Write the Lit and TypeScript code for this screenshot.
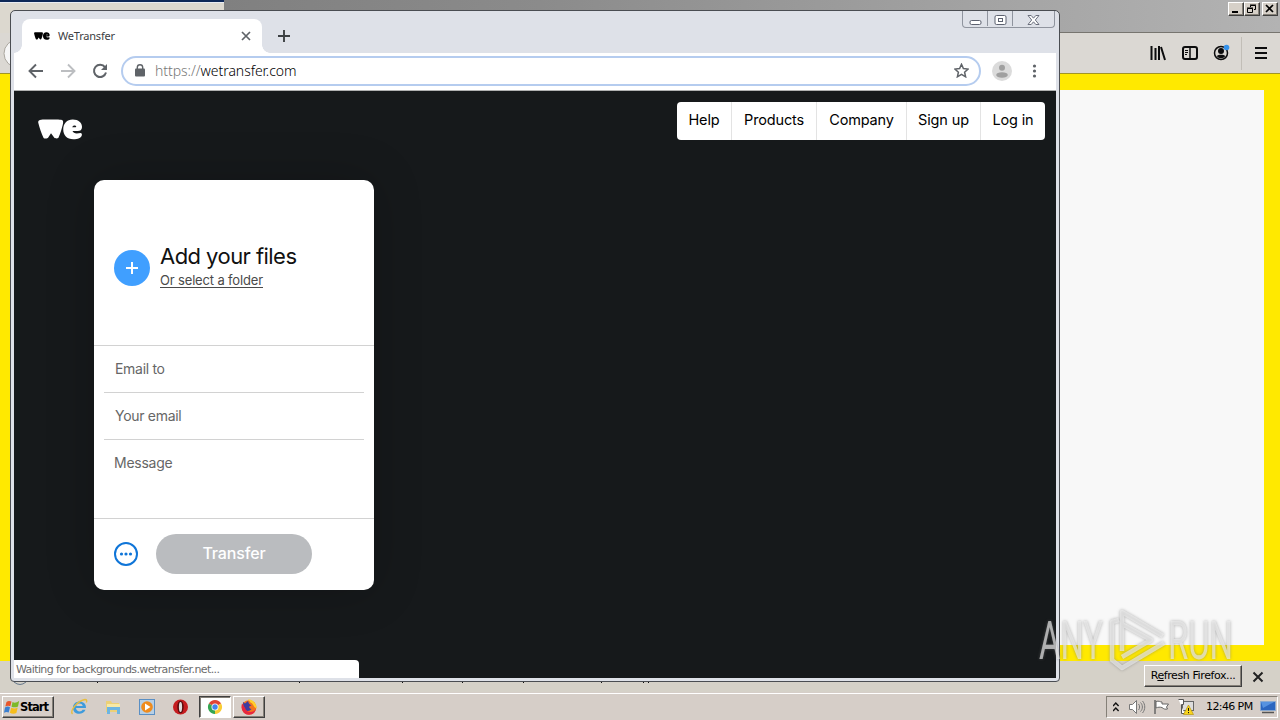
import { LitElement, html, css, svg } from "lit";
import { customElement } from "lit/decorators.js";

const wePath = svg`
  <path d="M1 1.500C3 0 8 .6 12 .6S22 0 25 1.200c1 .6.8 2.800.3 4.800C24.300 10 23 15 21 19.500c-.6 1.300-3.600 1.300-4.500 0L13.300 15l-3 4.700c-.8 1.200-4 1.100-4.700-.1C3.500 15 1.500 9 .4 4.500.1 3.200.1 2.200 1 1.500z"/>
  <path fill-rule="evenodd" d="M35.500.4c6 0 9.500 3.400 9.500 8 0 3-1.800 4.300-4.500 4.300h-5.200c.5 1.700 2.200 2.400 4.300 2.400 1.500 0 2.600-.5 4-.5 1 0 1.500 1 1.200 2.300-.6 2.800-4 4.300-8.600 4.300-6.700 0-10.400-4.300-10.400-10.500C25.800 4.600 29.600.4 35.500.4zM35 8.700h3c.8 0 1.200-.4 1-1-.5-1.500-3.500-1.400-4 1z"/>`;

@customElement("app-root")
export class AppRoot extends LitElement {
  static styles = css`
    :host { display: block; width: 1280px; height: 720px; overflow: hidden; position: relative; background: #d6cec8; font-family: "DejaVu Sans", sans-serif; }
    * { box-sizing: border-box; }
    svg { display: block; flex: none; }
    .desktop { display: flex; flex-direction: column; height: 720px; }

    .ff-title { height: 33px; display: flex; background: #dcd8cf; }
    .ff-tab { width: 224px; height: 33px; border-top: 2px solid #0e2858; box-shadow: inset 0 1px #e9ecf2; }
    .ff-strip { flex: 1; background: linear-gradient(90deg, #808080, #8b8b8b 30%, #b3b3b3); border-bottom: 1px solid #77756f; display: flex; justify-content: flex-end; align-items: flex-start; padding: 2px 2px 0 0; }
    .wb { width: 16px; height: 14px; background: #d6d0c8; border: 1px solid; border-color: #fff #404040 #404040 #fff; box-shadow: inset -1px -1px #858078; }
    .wb.last { margin-left: 2px; }
    .ff-bar { height: 40px; background: #dbd8d3; display: flex; align-items: center; justify-content: flex-end; padding-right: 13px; }
    .ff-bar .i1 { margin-right: 16px; }
    .ff-bar .i2 { margin-right: 15px; }
    .ff-bar .i3 { margin-right: 10px; }
    .ff-sep { width: 1px; height: 33px; background: #c2beb7; margin-right: 13px; }
    .ff-body { height: 588px; background: #ffe900; border-top: 1px solid #a19527; padding: 16px 16px 16px 30px; }
    .ff-page { height: 555px; background: #f8f8f8; }
    .ff-note { height: 31px; background: #d5d1c8; display: flex; justify-content: flex-end; align-items: center; padding-right: 16px; }
    .refresh { width: 98px; height: 22px; margin: -2px 10px 0 0; border: 1px solid; border-color: #fff #404040 #404040 #fff; box-shadow: inset -1px -1px #858078; background: #d6d1c9; font-size: 11px; letter-spacing: -0.4px; line-height: 20px; text-align: center; color: #000; white-space: nowrap; }

    .taskbar { height: 28px; border-top: 1px solid #d6cec8; background: #d6cec8; box-shadow: inset 0 1px #fff; display: flex; align-items: center; padding: 2px 2px 2px; }
    .start { width: 52px; height: 22px; display: flex; align-items: center; border: 1px solid; border-color: #fff #404040 #404040 #fff; box-shadow: inset -1px -1px #858078; padding-left: 1px; font: bold 11.500px "DejaVu Sans", sans-serif; letter-spacing: -0.9px; color: #000; white-space: nowrap; }
    .ql { display: flex; align-items: center; margin-left: 16px; gap: 16px; }
    .q-on { width: 32px; height: 22px; margin-left: 9px; background: #fff; border: 1px solid; border-color: #404040 #fff #fff #404040; box-shadow: inset 1px 1px #858078; display: grid; place-items: center; }
    .q-off { width: 32px; height: 22px; margin-left: 2px; border: 1px solid; border-color: #fff #404040 #404040 #fff; box-shadow: inset -1px -1px #858078; display: grid; place-items: center; }
    .tray { margin-left: auto; width: 172px; height: 22px; border: 1px solid; border-color: #858078 #fff #fff #858078; display: flex; align-items: center; padding-left: 6px; }
    .speaker { margin-left: 6px; }
    .trayicon { margin-left: 8px; }
    .clock { margin-left: 12px; width: 46px; font-size: 11px; letter-spacing: -0.6px; white-space: nowrap; color: #000; }
    .peek { margin-left: 8px; }

    .win { position: absolute; left: 10px; top: 10px; width: 1050px; height: 672px; border: 1px solid #4a4d52; border-radius: 5px 5px 4px 4px; background: #dee1e8; padding: 0 3px 3px; display: flex; flex-direction: column; }
    .tabs { height: 42px; display: flex; align-items: flex-end; flex: none; }
    .tab { position: relative; width: 240px; height: 34px; margin-left: 8px; background: #fff; border-radius: 8px 8px 0 0; display: flex; align-items: center; padding: 0 11px 0 12px; }
    .tab::before, .tab::after { content: ""; position: absolute; bottom: 0; width: 8px; height: 8px; }
    .tab::before { left: -8px; background: radial-gradient(circle at 0 0, transparent 7.5px, #fff 8px); }
    .tab::after { right: -8px; background: radial-gradient(circle at 100% 0, transparent 7.5px, #fff 8px); }
    .tt { font: 11px "Noto Sans", sans-serif; color: #3c4043; margin: -2px 0 0 8px; flex: 1; letter-spacing: -0.2px; white-space: nowrap; }
    .plus { margin: 0 0 11px 16px; }
    .caps { margin-left: auto; margin-right: 1px; align-self: flex-start; display: flex; width: 93px; height: 17px; border: 1px solid #8f949e; border-top: 0; border-radius: 0 0 4px 4px; }
    .cap { width: 25px; height: 15px; display: grid; place-items: center; border-right: 1px solid #8f949e; }
    .cap.x { flex: 1; border: 0; }
    .nav { height: 38px; flex: none; background: #fff; border-bottom: 1px solid #b0b1b1; display: flex; align-items: center; padding: 0 0 2px 13px; }
    .nav > svg { margin-right: 14px; }
    .nav > .reload { margin-right: 12px; }
    .omni { width: 860px; height: 30px; border: 2px solid #b5ccef; border-radius: 15px; display: flex; align-items: center; padding: 0 10px 0 12px; font: 14px "Noto Sans", sans-serif; }
    .url { margin-left: 10px; flex: 1; color: #000; font-weight: 300; letter-spacing: -0.05px; white-space: nowrap; }
    .url span { color: #777; }
    .ava { margin-left: 11px; }

    .page { flex: 1; background: #16191b; display: flex; flex-direction: column; position: relative; }
    .top { display: flex; justify-content: space-between; padding: 11px 11px 0 24px; height: 89px; flex: none; }
    .logo { margin-top: 17px; }
    .menu { display: flex; height: 38px; background: #fff; border-radius: 4px; font: 14.500px "Inter", sans-serif; letter-spacing: -0.15px; color: #000; }
    .menu div { border-right: 1px solid #e3e3e3; line-height: 36px; text-align: center; white-space: nowrap; }
    .menu div:last-child { border: 0; }
    .w1 { width: 55px; } .w2 { width: 85px; } .w3 { width: 90px; } .w4 { width: 74px; } .w5 { width: 64px; }
    .card { width: 280px; height: 410px; margin-left: 80px; background: #fff; border-radius: 10px; display: flex; flex-direction: column; font-family: "Inter", sans-serif; box-shadow: 0 0 50px rgba(0,0,0,.2); }
    .add { height: 166px; border-bottom: 1px solid #d2d2d2; display: flex; align-items: center; padding: 10px 0 0 20px; }
    .add-t { margin: -4px 0 0 10px; display: flex; flex-direction: column; align-items: flex-start; }
    .h { font-size: 22px; line-height: 26px; color: #111; letter-spacing: -0.55px; white-space: nowrap; }
    .s { font-size: 13px; line-height: 14px; margin-top: 4px; color: #4a4a4a; letter-spacing: -0.16px; border-bottom: 1px solid #4a4a4a; white-space: nowrap; }
    .f { height: 47px; margin: 0 10px; padding-left: 11px; border-bottom: 1px solid #d2d2d2; line-height: 46px; font-size: 14px; letter-spacing: -0.3px; color: #666; white-space: nowrap; }
    .m { height: 79px; padding-left: 20px; line-height: 46px; border-bottom: 1px solid #d2d2d2; font-size: 14px; letter-spacing: -0.25px; color: #666; }
    .act { flex: 1; display: flex; align-items: center; padding: 0 0 2px 20px; }
    .btn { width: 156px; height: 40px; margin-left: 18px; border-radius: 20px; background: #babcbf; color: #fff; font-size: 16px; font-weight: 500; letter-spacing: -0.15px; line-height: 38px; text-align: center; }
    .status { position: absolute; left: 0; bottom: 0; width: 345px; height: 18px; background: #fff; border-radius: 0 4px 0 0; padding-left: 2px; font-size: 11px; line-height: 19px; color: #6b6b6b; letter-spacing: -0.6px; white-space: nowrap; }
    .under { position: absolute; left: 0; top: 682px; }
    .ring { position: absolute; left: 3px; top: 39px; }
    .wm { position: absolute; left: 1030px; top: 600px; overflow: visible; filter: drop-shadow(0 0 1.500px rgba(110,110,110,.8)); }
  `;

  render() {
    return html`
      <div class="desktop">
        <div class="ff-title">
          <div class="ff-tab"></div>
          <div class="ff-strip">
            <div class="wb"><svg width="14" height="12"><path d="M3 9h6" stroke="#000" stroke-width="2"/></svg></div>
            <div class="wb"><svg width="14" height="12" fill="none" stroke="#000"><path d="M5.500 4V2.500h5v4H9M5 2h6M2.500 5.500h5v4h-5zM2 5h6"/></svg></div>
            <div class="wb last"><svg width="14" height="12"><path d="M3 2l7 7M10 2L3 9" stroke="#000" stroke-width="1.700"/></svg></div>
          </div>
        </div>
        <div class="ff-bar">
          <svg class="i1" width="16" height="16" stroke="#0c0c0d" stroke-width="2" fill="none"><path d="M1.500 1v14M5.500 3v12M9 1v14M11 2l4 13"/></svg>
          <svg class="i2" width="16" height="16" fill="none" stroke="#0c0c0d"><rect x="1" y="2" width="14" height="12" rx="2" stroke-width="2"/><path d="M8 2v12" stroke-width="1.500"/><path d="M3 5.500h3M3 7.500h3M3 9.500h2"/></svg>
          <svg class="i3" width="18" height="18"><circle cx="8" cy="9" r="6.500" fill="none" stroke="#0c0c0d" stroke-width="1.500"/><circle cx="8" cy="7" r="3" fill="#0c0c0d"/><path d="M3.800 12c1.500-1.700 7-1.700 8.500 0-1.800 3-6.700 3-8.500 0z" fill="#0c0c0d"/><circle cx="13.500" cy="3.500" r="2.800" fill="#3592ea"/></svg>
          <div class="ff-sep"></div>
          <svg width="12" height="14" stroke="#0c0c0d" stroke-width="2"><path d="M0 2h12M0 7h12M0 12h12"/></svg>
        </div>
        <div class="ff-body"><div class="ff-page"></div></div>
        <div class="ff-note">
          <div class="refresh">R<u>e</u>fresh Firefox...</div>
          <svg width="12" height="12"><path d="M1.500 1.500l9 9M10.500 1.500l-9 9" stroke="#222" stroke-width="2"/></svg>
        </div>
        <div class="taskbar">
          <div class="start">
            <svg width="16" height="16"><path d="M2.500 3C4 1.500 6 1.800 7.500 2.600L6.300 7.300C5 6.400 3 6.400 1.300 7.500z" fill="#e8562a"/><path d="M8.500 3c2 1 3.700 1 6.700-1.300L14 7.500c-2 1.200-4.700 1-6.500.2z" fill="#7db928"/><path d="M1 8.500c1.700-1.200 3.500-1.200 5-.3l-1.300 5.300c-1.500-.8-3-.8-4.700.3z" fill="#3b7fd0"/><path d="M7.200 8.700c2 1 4.700 1 6.500-.1L12.400 14c-2 1.200-4.700 1-6.500-.3z" fill="#f5bd1c"/></svg>
            Start
          </div>
          <div class="ql">
            <svg width="18" height="18"><path fill-rule="evenodd" d="M16 10H6c.3 4 5.500 4.300 6.500 1.700h3C13.500 17.500 3 17.500 3 9.700 3 1.500 16.300 1.500 16 10zM6.200 8h6.500c-.4-3.300-5.900-3.300-6.500 0z" fill="#3e9bdc"/><path d="M2.500 16C-1 13 8 2.500 15 1.500c2 0 2 1.500 1.300 3" fill="none" stroke="#e8bd3e" stroke-width="1.400"/></svg>
            <svg width="18" height="18"><path d="M2 3h5l1 2h7v9H2z" fill="#ecd077"/><path d="M3 6h13v3H3z" fill="#f7e9a6"/><path d="M3 9h13v7h-3v-4H6v4H3z" fill="#6db5e2"/></svg>
            <svg width="18" height="18"><rect x="1.500" y="1.500" width="15" height="15" fill="#b7cfe5" stroke="#5a8fc4"/><circle cx="9" cy="9" r="5.800" fill="#ef8b1d"/><path d="M7 5.500l5.500 3.500L7 12.500z" fill="#fff"/></svg>
            <svg width="18" height="18"><circle cx="8.500" cy="9" r="7.500" fill="#c51d20"/><ellipse cx="8.500" cy="9" rx="3.200" ry="6.300" fill="#5c0b0d"/><ellipse cx="8.500" cy="9" rx="1.600" ry="5" fill="#ddd"/></svg>
          </div>
          <div class="q-on"><svg width="16" height="16"><path d="M8 8L1.900 4.500A7 7 0 0 1 14.100 4.500z" fill="#e24435"/><path d="M8 8V15A7 7 0 0 1 1.900 4.500z" fill="#35a551"/><path d="M8 8L14.100 4.500A7 7 0 0 1 8 15z" fill="#f9cc34"/><circle cx="8" cy="8" r="3.500" fill="#fff"/><circle cx="8" cy="8" r="2.700" fill="#4485ee"/></svg></div>
          <div class="q-off"><svg width="18" height="18"><circle cx="9" cy="9.500" r="7.300" fill="#f4731f"/><path d="M8 1.500c5-.5 9 4.500 8.500 9-3-1-3-5-6-6z" fill="#ffd02c"/><path d="M3 4l2 1.500L8 3c.5 2 1 3 3.500 4.500-3 0-3 3 0 3.500-2 3-6.500 2.500-8-1z" fill="#3f3ca0"/><path d="M2 5.500C.5 11 3 16.500 9 16.800c4 0 6.500-3 7-6-3 5-10 4-11-1z" fill="#e8273f"/></svg></div>
          <div class="tray">
            <svg width="10" height="14" fill="none" stroke="#111" stroke-width="1.400"><path d="M0 6l2.800-3L5.600 6M0 11l2.800-3 2.800 3"/></svg>
            <svg class="speaker" width="17" height="16" fill="none" stroke="#777"><path d="M.5 5.500h3l4-4v13l-4-4h-3z" fill="#fff"/><path d="M9.500 5c1.500 1.500 1.500 4.500 0 6M11.500 3.500c2.500 2.500 2.500 6.500 0 9M13.500 2c3 3.500 3 8.500 0 12"/></svg>
            <svg class="trayicon" width="16" height="16" stroke="#666" fill="#fff"><path d="M1 1v14" stroke-width="1.500"/><path d="M2 2.500c3-1 4 .5 6 .5v2h6.500l-2 3 1 2c-2 .5-4 0-5.500-1.500-2-.5-4-.5-6 .5z"/></svg>
            <svg class="trayicon" width="16" height="16"><rect x="4.500" y="2.500" width="11" height="9" fill="#ddd" stroke="#666"/><path d="M.5.500h5v5h-2v9h3" fill="#fff" stroke="#555"/><path d="M10.500 6l5 9.500h-10z" fill="#f8d41c" stroke="#b08d00" stroke-width=".6"/><path d="M10.500 9v3M10.500 13v1.200" stroke="#111"/></svg>
            <span class="clock">12:46 PM</span>
            <svg class="peek" width="16" height="14"><path d="M.5 1.500h15v9H.5z" fill="#2b66c0" stroke="#8aa9cf"/><path d="M1 2h13L3 8z" fill="#5592e0"/><path d="M2 12.500h12" stroke="#555" stroke-width="1.500"/></svg>
          </div>
        </div>
      </div>

      <svg class="ring" width="10" height="30"><circle cx="15" cy="14.500" r="14" fill="#f6f6f6" stroke="#aaa69e"/></svg>
      <svg class="under" width="700" height="5"><path d="M14 0q6 5 12 0" fill="none" stroke="#66798c"/><path d="M97.500 0v1M299.500 0v1M402.500 0v1M462.500 0v1M523.500 0v1M601.500 0v1M643.500 0v1M648.500 0v1" stroke="#111"/></svg>

      <div class="win">
        <div class="tabs">
          <div class="tab">
            <svg width="16" height="8" viewBox="0 0 46 22" preserveAspectRatio="none">${wePath}</svg>
            <span class="tt">WeTransfer</span>
            <svg width="10" height="10"><path d="M1 1l8 8M9 1L1 9" stroke="#5f6368" stroke-width="1.700"/></svg>
          </div>
          <svg class="plus" width="12" height="12"><path d="M6 0v12M0 6h12" stroke="#3c4043" stroke-width="1.900"/></svg>
          <div class="caps">
            <div class="cap"><svg width="13" height="14"><rect x="1" y="8.500" width="11" height="4" rx="1.500" fill="#fff" stroke="#5d6270"/></svg></div>
            <div class="cap"><svg width="13" height="14"><rect x="1" y="3.500" width="11" height="9" rx="1.500" fill="#fff" stroke="#5d6270"/><rect x="4.500" y="6.500" width="4" height="3" fill="#fff" stroke="#5d6270"/></svg></div>
            <div class="cap x"><svg width="13" height="14"><path d="M1 3.500h3.200l2.300 2.700 2.300-2.700H12L8.300 8l3.700 4.500H8.800L6.500 9.800l-2.300 2.700H1L4.700 8z" fill="#fff" stroke="#5d6270" stroke-width=".9"/></svg></div>
          </div>
        </div>
        <div class="nav">
          <svg width="18" height="18" fill="none" stroke="#5f6368" stroke-width="1.900"><path d="M16 9H3M9 2.500L2.500 9 9 15.500"/></svg>
          <svg width="18" height="18" fill="none" stroke="#bcbec1" stroke-width="1.900"><path d="M2 9h13M9 2.500L15.500 9 9 15.500"/></svg>
          <svg class="reload" width="18" height="18"><path d="M14 5.200A6.100 6.100 0 1 0 15 10.500" fill="none" stroke="#5f6368" stroke-width="2"/><path d="M16 2v6h-6z" fill="#5f6368"/></svg>
          <div class="omni">
            <svg width="10" height="13"><rect y="4.500" width="10" height="8" rx="1" fill="#5f6368"/><path d="M2.300 5V3.500a2.700 2.700 0 0 1 5.400 0V5" fill="none" stroke="#5f6368" stroke-width="1.400"/></svg>
            <div class="url"><span>https://</span>wetransfer.com</div>
            <svg width="15" height="15"><path d="M7.500 1.300l1.900 4.300 4.700.5-3.500 3.100 1 4.600-4.100-2.400-4.100 2.400 1-4.600L.9 6.100l4.700-.5z" fill="none" stroke="#5f6368" stroke-width="1.500"/></svg>
          </div>
          <svg class="ava" width="20" height="20"><circle cx="10" cy="10" r="10" fill="#dbdbdb"/><circle cx="10" cy="6.700" r="3" fill="#a0a0a0"/><ellipse cx="10" cy="14" rx="5.800" ry="2.700" fill="#a0a0a0"/></svg>
          <svg width="14" height="16" fill="#5f6368"><circle cx="8.500" cy="3" r="1.600"/><circle cx="8.500" cy="8" r="1.600"/><circle cx="8.500" cy="13" r="1.600"/></svg>
        </div>
        <div class="page">
          <div class="top">
            <svg class="logo" width="45" height="21" viewBox="0 0 46 22" preserveAspectRatio="none" fill="#fff">${wePath}</svg>
            <div class="menu"><div class="w1">Help</div><div class="w2">Products</div><div class="w3">Company</div><div class="w4">Sign up</div><div class="w5">Log in</div></div>
          </div>
          <div class="card">
            <div class="add">
              <svg width="36" height="36"><circle cx="18" cy="18" r="18" fill="#409fff"/><path d="M18 12v12M12 18h12" stroke="#fff" stroke-width="2"/></svg>
              <div class="add-t"><div class="h">Add your files</div><div class="s">Or select a folder</div></div>
            </div>
            <div class="f">Email to</div>
            <div class="f">Your email</div>
            <div class="m">Message</div>
            <div class="act">
              <svg width="24" height="24"><circle cx="12" cy="12" r="11" fill="none" stroke="#0f75d8" stroke-width="2"/><g fill="#0f75d8"><circle cx="7.500" cy="12" r="1.600"/><circle cx="12" cy="12" r="1.600"/><circle cx="16.500" cy="12" r="1.600"/></g></svg>
              <div class="btn">Transfer</div>
            </div>
          </div>
          <div class="status">Waiting for backgrounds.wetransfer.net...</div>
        </div>
      </div>

      <svg class="wm" width="215" height="80">
        <g fill="#efefef" fill-opacity=".65" font-family="Roboto" font-weight="400" font-size="53">
          <text x="9" y="59" textLength="64" lengthAdjust="spacingAndGlyphs">ANY</text>
          <text x="138" y="59" textLength="65" lengthAdjust="spacingAndGlyphs">RUN</text>
        </g>
        <g fill="none" stroke="#efefef" stroke-opacity=".65" stroke-width="4.500" stroke-linejoin="round"><path d="M92 51V12l41 24M92 24l29 16-29 17M134 43L92 68l-10-8V22l7-2"/></g>
      </svg>
    `;
  }
}
